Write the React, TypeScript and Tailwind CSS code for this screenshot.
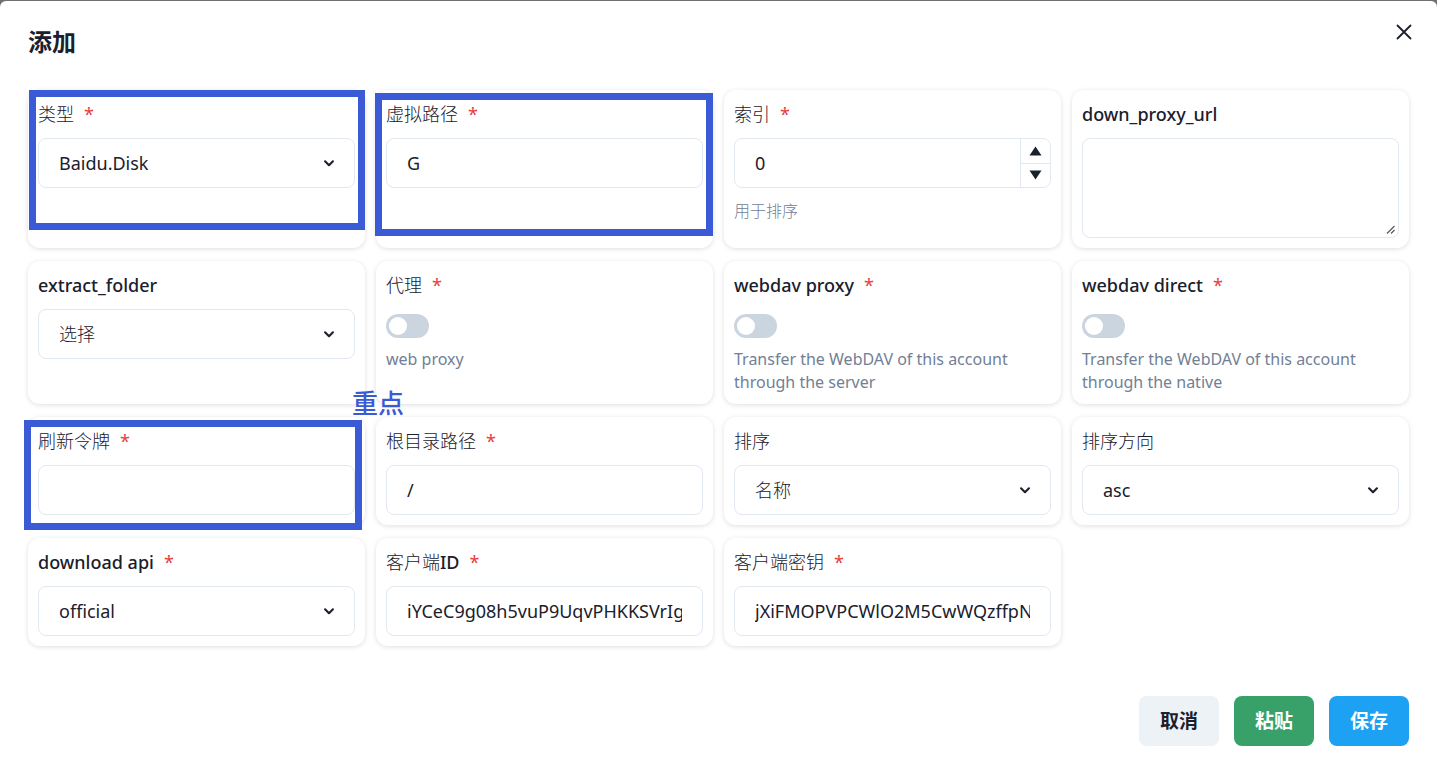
import type { ReactNode } from "react";

const font = {
  fontFamily: '"Noto Sans", "Noto Sans CJK SC", sans-serif',
};

const CJK = /([\u4e00-\u9fff]+)/;

// CJK glyphs render lighter than latin ones in the reference
function Mixed({ text }: { text: string }) {
  const parts = text.split(CJK).filter(Boolean);
  return (
    <>
      {parts.map((p, i) =>
        CJK.test(p) ? (
          <span key={i} className="font-light">{p}</span>
        ) : (
          <span key={i}>{p}</span>
        )
      )}
    </>
  );
}

function Card({ children }: { children: ReactNode }) {
  return (
    <div className="bg-white rounded-xl shadow-[0_1px_5px_rgba(0,0,0,0.13)] p-[10px] flex flex-col">
      {children}
    </div>
  );
}

function Label({ text, required }: { text: string; required?: boolean }) {
  return (
    <div className="h-7 leading-7 text-[18px] font-medium text-[#1a202c] flex items-center">
      <span>
        <Mixed text={text} />
      </span>
      {required && <span className="ml-[10px] font-normal text-[#e53e3e]">*</span>}
    </div>
  );
}

function Chevron() {
  return (
    <svg className="w-[14px] h-[14px] text-[#1a202c]" viewBox="0 0 16 16" fill="none">
      <path d="M3.5 6l4.5 4.5L12.5 6" stroke="currentColor" strokeWidth="2.4" strokeLinecap="round" strokeLinejoin="round" />
    </svg>
  );
}

function Select({ value }: { value: string }) {
  return (
    <div className="mt-[10px] h-[50px] border border-[#e2e8f0] rounded-lg flex items-center justify-between pl-5 pr-[18px] text-[18px] text-[#1a202c]">
      <span>
        <Mixed text={value} />
      </span>
      <Chevron />
    </div>
  );
}

function TextInput({ value }: { value?: string }) {
  return (
    <div className="mt-[10px] h-[50px] border border-[#e2e8f0] rounded-lg flex items-center px-5 text-[18px] text-[#1a202c]">
      <div className="flex-1 overflow-hidden whitespace-nowrap">{value}</div>
    </div>
  );
}

function NumberInput({ value }: { value: string }) {
  return (
    <div className="mt-[10px] h-[50px] border border-[#e2e8f0] rounded-lg flex text-[18px] text-[#1a202c]">
      <div className="flex-1 flex items-center pl-5">{value}</div>
      <div className="w-[30px] border-l border-[#e2e8f0] flex flex-col">
        <div className="flex-1 flex items-center justify-center border-b border-[#e2e8f0]">
          <svg width="13" height="10" viewBox="0 0 13 10">
            <path d="M6.5 0.5L12.5 9.5H0.5Z" fill="#1a202c" />
          </svg>
        </div>
        <div className="flex-1 flex items-center justify-center">
          <svg width="13" height="10" viewBox="0 0 13 10">
            <path d="M0.5 0.5H12.5L6.5 9.5Z" fill="#1a202c" />
          </svg>
        </div>
      </div>
    </div>
  );
}

function TextArea() {
  return (
    <div className="mt-[10px] h-[100px] border border-[#e2e8f0] rounded-lg relative">
      <svg className="absolute right-[3px] bottom-[3px]" width="9" height="9" viewBox="0 0 9 9">
        <path d="M8.5 1L1 8.5M8.5 5L5 8.5" stroke="#555" strokeWidth="1.1" />
      </svg>
    </div>
  );
}

function Switch() {
  return (
    <div className="mt-[15px] w-[43px] h-6 rounded-full bg-[#cbd5e0] flex items-center px-[3px]">
      <div className="w-[18px] h-[18px] rounded-full bg-white" />
    </div>
  );
}

function Help({ children, cls = "mt-[10px]" }: { children: string; cls?: string }) {
  return (
    <div className={`${cls} text-[16px] leading-[23px] text-[#718096]`}>
      <Mixed text={children} />
    </div>
  );
}

export default function App() {
  return (
    <div className="w-[1437px] h-[763px] bg-[#707070] pt-px overflow-hidden" style={font}>
      <div className="relative h-[762px] bg-white rounded-t-[6px] px-7">
        <div className="flex items-center justify-between pt-[25px]">
          <h1 className="text-[24px] leading-8 font-bold text-[#1a202c]">添加</h1>
          <svg className="w-4 h-4 -mt-[21px] -mr-[3px]" viewBox="0 0 16 16" fill="none">
            <path d="M1.5 1.5l13 13M14.5 1.5l-13 13" stroke="#1a202c" strokeWidth="1.8" strokeLinecap="round" />
          </svg>
        </div>

        <div className="mt-[32px] grid grid-cols-4 gap-x-[11px] gap-y-[13px]">
          <Card>
            <Label text="类型" required />
            <Select value="Baidu.Disk" />
          </Card>
          <Card>
            <Label text="虚拟路径" required />
            <TextInput value="G" />
          </Card>
          <Card>
            <Label text="索引" required />
            <NumberInput value="0" />
            <Help cls="mt-[12px]">用于排序</Help>
          </Card>
          <Card>
            <Label text="down_proxy_url" />
            <TextArea />
          </Card>

          <Card>
            <Label text="extract_folder" />
            <Select value="选择" />
          </Card>
          <Card>
            <Label text="代理" required />
            <Switch />
            <Help>web proxy</Help>
          </Card>
          <Card>
            <Label text="webdav proxy" required />
            <Switch />
            <Help>Transfer the WebDAV of this account through the server</Help>
          </Card>
          <Card>
            <Label text="webdav direct" required />
            <Switch />
            <Help>Transfer the WebDAV of this account through the native</Help>
          </Card>

          <Card>
            <Label text="刷新令牌" required />
            <TextInput />
          </Card>
          <Card>
            <Label text="根目录路径" required />
            <TextInput value="/" />
          </Card>
          <Card>
            <Label text="排序" />
            <Select value="名称" />
          </Card>
          <Card>
            <Label text="排序方向" />
            <Select value="asc" />
          </Card>

          <Card>
            <Label text="download api" required />
            <Select value="official" />
          </Card>
          <Card>
            <Label text="客户端ID" required />
            <TextInput value="iYCeC9g08h5vuP9UqvPHKKSVrIgTzPqY" />
          </Card>
          <Card>
            <Label text="客户端密钥" required />
            <TextInput value="jXiFMOPVPCWlO2M5CwWQzffpNPaGYRBG" />
          </Card>
        </div>

        <div className="mt-[50px] flex justify-end gap-[15px]">
          <button className="w-20 h-[50px] rounded-lg bg-[#edf2f7] text-[19px] font-bold text-[#1a202c]">取消</button>
          <button className="w-20 h-[50px] rounded-lg bg-[#38a169] text-[19px] font-bold text-white">粘贴</button>
          <button className="w-20 h-[50px] rounded-lg bg-[#1da1f2] text-[19px] font-bold text-white">保存</button>
        </div>

        {/* annotation overlays */}
        <div className="absolute left-[29px] top-[89px] w-[336px] h-[140px] border-[7px] border-[#3a5bd5]" />
        <div className="absolute left-[375px] top-[92px] w-[338px] h-[143px] border-[7px] border-[#3a5bd5]" />
        <div className="absolute left-[24px] top-[419px] w-[338px] h-[110px] border-[7px] border-[#3a5bd5]" />
        <div className="absolute left-[352px] top-[387px] text-[26px] leading-[30px] font-medium text-[#3a5bd5]">重点</div>
      </div>
    </div>
  );
}
